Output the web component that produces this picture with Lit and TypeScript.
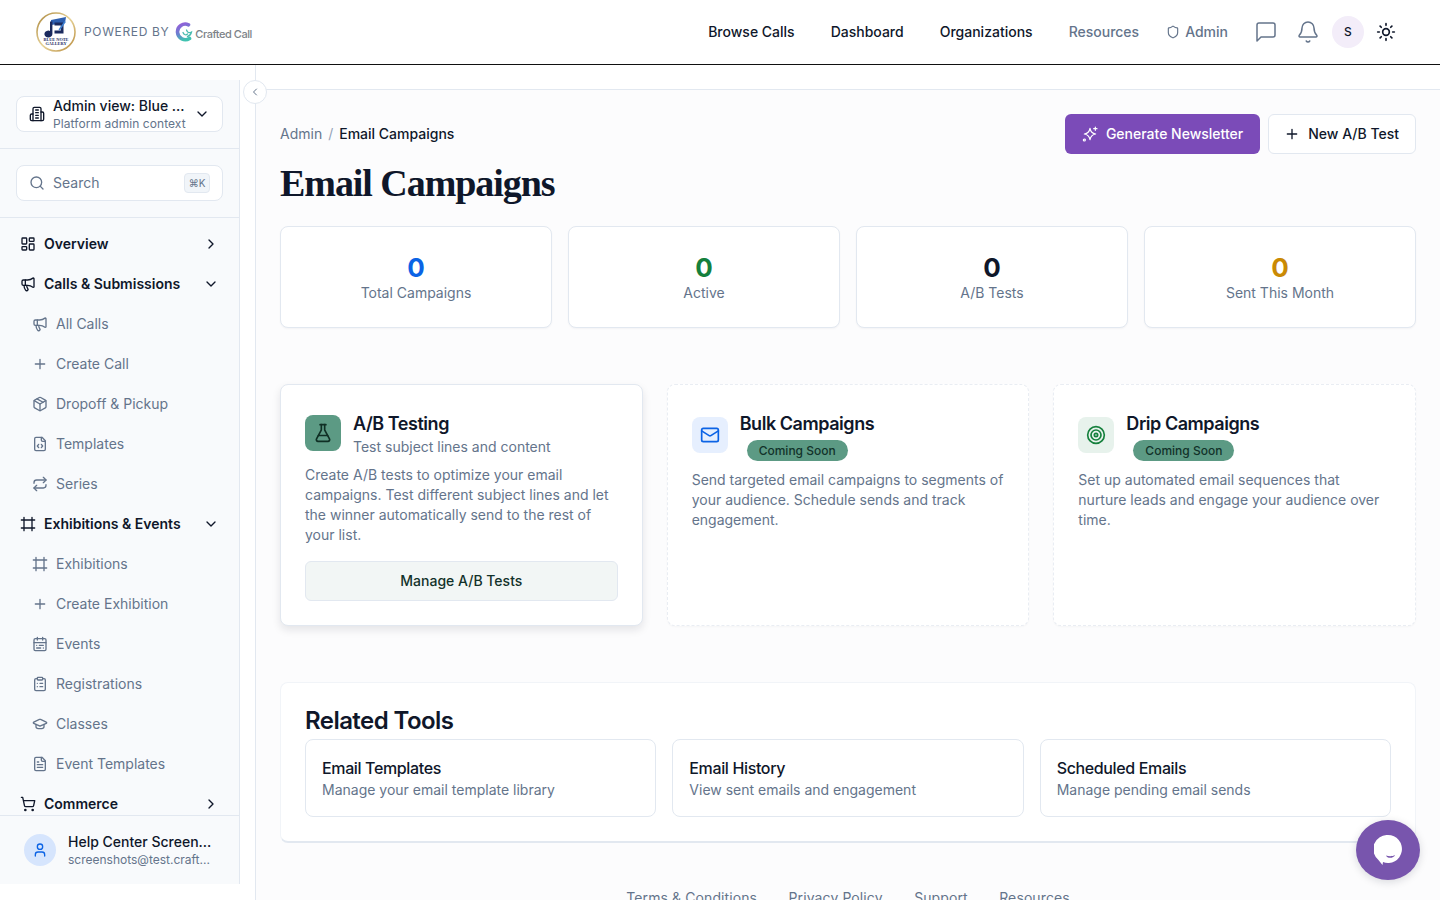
import { LitElement, html, css, svg } from "lit";
import { customElement } from "lit/decorators.js";

const P: Record<string, any> = {
  overview: svg`<rect x="3" y="3" width="7" height="9" rx="1"/><rect x="14" y="3" width="7" height="5" rx="1"/><rect x="14" y="12" width="7" height="9" rx="1"/><rect x="3" y="16" width="7" height="5" rx="1"/>`,
  megaphone: svg`<path d="M11 6a13 13 0 0 0 8.4-2.8A1 1 0 0 1 21 4v12a1 1 0 0 1-1.6.8A13 13 0 0 0 11 14H5a2 2 0 0 1-2-2V8a2 2 0 0 1 2-2z"/><path d="M6 14a12 12 0 0 0 2.4 7.2 2 2 0 0 0 3.2-2.4A8 8 0 0 1 10 14"/><path d="M8 6v8"/>`,
  plus: svg`<path d="M5 12h14M12 5v14"/>`,
  pkg: svg`<path d="M11 21.73a2 2 0 0 0 2 0l7-4A2 2 0 0 0 21 16V8a2 2 0 0 0-1-1.73l-7-4a2 2 0 0 0-2 0l-7 4A2 2 0 0 0 3 8v8a2 2 0 0 0 1 1.73z"/><path d="M12 22V12"/><path d="M3.29 7 12 12l8.71-5"/><path d="m7.5 4.27 9 5.15"/>`,
  filecode: svg`<path d="M10 12.5 8 15l2 2.5"/><path d="m14 12.5 2 2.5-2 2.5"/><path d="M14 2v4a2 2 0 0 0 2 2h4"/><path d="M15 2H6a2 2 0 0 0-2 2v16a2 2 0 0 0 2 2h12a2 2 0 0 0 2-2V7z"/>`,
  repeat: svg`<path d="m17 2 4 4-4 4"/><path d="M3 11v-1a4 4 0 0 1 4-4h14"/><path d="m7 22-4-4 4-4"/><path d="M21 13v1a4 4 0 0 1-4 4H3"/>`,
  frame: svg`<path d="M22 6H2M22 18H2M6 2v20M18 2v20"/>`,
  calendar: svg`<rect x="3" y="4" width="18" height="18" rx="2"/><path d="M16 2v4M8 2v4M3 10h18M17 14h-6M13 18H7M7 14h.01M17 18h.01"/>`,
  clipboard: svg`<rect x="8" y="2" width="8" height="4" rx="1"/><path d="M16 4h2a2 2 0 0 1 2 2v14a2 2 0 0 1-2 2H6a2 2 0 0 1-2-2V6a2 2 0 0 1 2-2h2"/><path d="M12 11h4M12 16h4M8 11h.01M8 16h.01"/>`,
  cap: svg`<path d="M21.42 10.922a1 1 0 0 0-.019-1.838L12.83 5.18a2 2 0 0 0-1.66 0L2.6 9.08a1 1 0 0 0 0 1.832l8.57 3.908a2 2 0 0 0 1.66 0z"/><path d="M6 12.5V16a6 3 0 0 0 12 0v-3.5"/>`,
  filetext: svg`<path d="M15 2H6a2 2 0 0 0-2 2v16a2 2 0 0 0 2 2h12a2 2 0 0 0 2-2V7Z"/><path d="M14 2v4a2 2 0 0 0 2 2h4"/><path d="M10 9H8M16 13H8M16 17H8"/>`,
  cart: svg`<circle cx="8" cy="21" r="1"/><circle cx="19" cy="21" r="1"/><path d="M2.05 2.05h2l2.66 12.42a2 2 0 0 0 2 1.58h9.78a2 2 0 0 0 1.95-1.57l1.65-7.43H5.12"/>`,
  building: svg`<path d="M6 22V4a2 2 0 0 1 2-2h8a2 2 0 0 1 2 2v18Z"/><path d="M6 12H4a2 2 0 0 0-2 2v6a2 2 0 0 0 2 2h2"/><path d="M18 9h2a2 2 0 0 1 2 2v9a2 2 0 0 1-2 2h-2"/><path d="M10 6h4M10 10h4M10 14h4M10 18h4"/>`,
  search: svg`<circle cx="11" cy="11" r="8"/><path d="m21 21-4.3-4.3"/>`,
  shield: svg`<path d="M20 13c0 5-3.5 7.5-7.66 8.95a1 1 0 0 1-.67-.01C7.5 20.5 4 18 4 13V6a1 1 0 0 1 1-1c2 0 4.5-1.2 6.24-2.72a1.17 1.17 0 0 1 1.52 0C14.51 3.81 17 5 19 5a1 1 0 0 1 1 1z"/>`,
  message: svg`<path d="M21 15a2 2 0 0 1-2 2H7l-4 4V5a2 2 0 0 1 2-2h14a2 2 0 0 1 2 2z"/>`,
  bell: svg`<path d="M10.268 21a2 2 0 0 0 3.464 0"/><path d="M3.262 15.326A1 1 0 0 0 4 17h16a1 1 0 0 0 .74-1.673C19.41 13.956 18 12.499 18 8A6 6 0 0 0 6 8c0 4.499-1.411 5.956-2.738 7.326"/>`,
  sun: svg`<circle cx="12" cy="12" r="4"/><path d="M12 2v2M12 20v2M4.93 4.93l1.41 1.41M17.66 17.66l1.41 1.41M2 12h2M20 12h2M6.34 17.66l-1.41 1.41M19.07 4.93l-1.41 1.41"/>`,
  sparkles: svg`<path d="M11 3.5c.9 5.3 3.2 7.6 8.5 8.5-5.3.9-7.6 3.2-8.5 8.5-.9-5.300-3.200-7.600-8.500-8.500 5.300-.9 7.600-3.200 8.500-8.500z" transform="translate(1 0)"/><path d="M20 1.500v5M17.500 4h5"/><circle cx="3.500" cy="21" r="1.500"/>`,
  flask: svg`<path d="M14 2v6a2 2 0 0 0 .245.96l5.51 10.08A2 2 0 0 1 18 22H6a2 2 0 0 1-1.755-2.96l5.51-10.08A2 2 0 0 0 10 8V2"/><path d="M6.453 15h11.094M8.500 2h7"/>`,
  mail: svg`<rect x="2" y="4" width="20" height="16" rx="2"/><path d="m22 7-8.970 5.700a1.940 1.940 0 0 1-2.060 0L2 7"/>`,
  target: svg`<circle cx="12" cy="12" r="10"/><circle cx="12" cy="12" r="6"/><circle cx="12" cy="12" r="2"/>`,
  user: svg`<path d="M19 21v-2a4 4 0 0 0-4-4H9a4 4 0 0 0-4 4v2"/><circle cx="12" cy="7" r="4"/>`,
  right: svg`<path d="m9 18 6-6-6-6"/>`,
  left: svg`<path d="m15 18-6-6 6-6"/>`,
  down: svg`<path d="m6 9 6 6 6-6"/>`,
};

const icon = (n: string, size = 16, sw = 2) =>
  html`<svg class="ic" width=${size} height=${size} viewBox="0 0 24 24" fill="none" stroke="currentColor" stroke-width=${sw} stroke-linecap="round" stroke-linejoin="round">${P[n]}</svg>`;

type NavRow = { label: string; icon: string; chev?: "right" | "down"; sub?: boolean };

const NAV: NavRow[] = [
  { label: "Overview", icon: "overview", chev: "right" },
  { label: "Calls & Submissions", icon: "megaphone", chev: "down" },
  { label: "All Calls", icon: "megaphone", sub: true },
  { label: "Create Call", icon: "plus", sub: true },
  { label: "Dropoff & Pickup", icon: "pkg", sub: true },
  { label: "Templates", icon: "filecode", sub: true },
  { label: "Series", icon: "repeat", sub: true },
  { label: "Exhibitions & Events", icon: "frame", chev: "down" },
  { label: "Exhibitions", icon: "frame", sub: true },
  { label: "Create Exhibition", icon: "plus", sub: true },
  { label: "Events", icon: "calendar", sub: true },
  { label: "Registrations", icon: "clipboard", sub: true },
  { label: "Classes", icon: "cap", sub: true },
  { label: "Event Templates", icon: "filetext", sub: true },
  { label: "Commerce", icon: "cart", chev: "right" },
];

const STATS = [
  { v: "0", l: "Total Campaigns", c: "#0b63e5" },
  { v: "0", l: "Active", c: "#15803d" },
  { v: "0", l: "A/B Tests", c: "#0f172a" },
  { v: "0", l: "Sent This Month", c: "#ca8a04" },
];

const TOOLS = [
  { t: "Email Templates", d: "Manage your email template library" },
  { t: "Email History", d: "View sent emails and engagement" },
  { t: "Scheduled Emails", d: "Manage pending email sends" },
];

@customElement("app-root")
export class AppRoot extends LitElement {
  static styles = css`
    :host { display: block; width: 1440px; height: 900px; overflow: hidden; position: relative; background: #fff; color: #0f172a; font-family: Inter, "Liberation Sans", sans-serif; font-size: 14px; line-height: 20px; }
    * { box-sizing: border-box; }
    .ic { flex: none; display: block; }
    .hdr { height: 65px; border-bottom: 1px solid #111; display: flex; align-items: center; padding: 0 44px 0 36px; }
    .logo { display: block; flex: none; }
    .pow { margin-left: 8px; font-size: 12px; letter-spacing: 0.65px; color: #64748b; line-height: 16px; }
    .cc { margin-left: 5px; display: flex; align-items: center; flex: none; }
    .cc span { font-size: 11px; font-weight: 500; letter-spacing: -0.45px; color: #7d8388; margin: 3px 0 0 1px; line-height: 14px; }
    nav { margin-left: auto; display: flex; align-items: center; }
    nav a { font-weight: 500; color: #0f172a; margin-right: 36px; }
    nav a.mut { color: #64748b; font-weight: 500; }
    nav a.adm { display: flex; align-items: center; gap: 5px; margin-left: -9px; margin-right: 26px; color: #64748b; }
    .hi { color: #64748b; margin-right: 18px; }
    .av { width: 32px; height: 32px; border-radius: 50%; background: #f3edf9; font-size: 12px; font-weight: 500; display: flex; align-items: center; justify-content: center; margin-left: -6px; margin-right: 12px; }
    .sun { color: #0f172a; }

    .body { display: flex; height: 835px; }
    .side { width: 240px; height: 804px; margin-top: 15px; flex: none; background: #f8fafc; border-right: 1px solid #e2e8f0; display: flex; flex-direction: column; }
    .sec { padding: 16px; border-bottom: 1px solid #e2e8f0; height: 69px; flex: none; }
    .box { height: 36px; background: #fff; border: 1px solid #e2e8f0; border-radius: 8px; display: flex; align-items: center; }
    .org { padding: 0 12px; color: #0f172a; }
    .org .t { margin-left: 8px; flex: 1; min-width: 0; }
    .org .t1 { font-weight: 500; line-height: 18px; white-space: nowrap; }
    .org .t2 { font-size: 12px; letter-spacing: 0.07px; color: #64748b; line-height: 16px; margin-top: 1px; white-space: nowrap; }
    .srch { padding: 0 12px; color: #64748b; }
    .srch span { margin-left: 8px; flex: 1; }
    .kbd { flex: none; width: 26px; height: 20px; background: #f1f5f9; border: 1px solid #e2e8f0; border-radius: 4px; font-size: 10px; display: flex; align-items: center; justify-content: center; color: #64748b; line-height: 1; }
    .list { flex: 1; min-height: 0; overflow: hidden; padding-top: 6px; }
    .row { height: 40px; display: flex; align-items: center; padding-left: 20px; font-weight: 600; color: #0f172a; }
    .row span { margin-left: 8px; flex: 1; }
    .row .ch { margin-right: 20px; }
    .row.sub { padding-left: 32px; font-weight: 400; color: #64748b; }
    .foot { height: 69px; flex: none; border-top: 1px solid #e2e8f0; display: flex; align-items: center; padding: 0 24px; }
    .ua { width: 32px; height: 32px; border-radius: 50%; background: #d6e5fd; color: #0b63e5; display: flex; align-items: center; justify-content: center; flex: none; }
    .ut { margin-left: 12px; min-width: 0; }
    .ut b { display: block; font-weight: 500; line-height: 20px; white-space: nowrap; }
    .ut small { display: block; font-size: 12px; color: #64748b; line-height: 16px; white-space: nowrap; }

    .main { margin-left: 15px; flex: 1; min-width: 0; border-left: 1px solid #e2e8f0; position: relative; background: #fcfcfd; }
    .top { height: 25px; background: #fff; border-bottom: 1px solid #e2e8f0; }
    .coll { position: absolute; left: -13px; top: 15px; width: 24px; height: 24px; border-radius: 50%; background: #fff; border: 1px solid #e2e8f0; color: #64748b; display: flex; align-items: center; justify-content: center; }
    .con { padding: 24px 24px 0; }
    .bar { display: flex; align-items: center; height: 40px; }
    .crumb { display: flex; gap: 6px; color: #64748b; }
    .crumb b { font-weight: 500; color: #0f172a; }
    .crumb i { font-style: normal; color: #94a3b8; }
    .btn { height: 40px; border-radius: 6px; display: flex; align-items: center; gap: 8px; font-weight: 500; }
    .btn.p { margin-left: auto; background: #7b4bb8; color: #fff; padding: 0 17px; }
    .btn.s { margin-left: 8px; background: #fff; border: 1px solid #e2e8f0; color: #0f172a; padding: 0 16px 0 15px; }
    h1 { margin: 9px 0 23px; font-family: "Liberation Serif", serif; font-size: 38px; line-height: 40px; font-weight: 700; letter-spacing: -1.05px; color: #0f172a; }
    .stats { display: grid; grid-template-columns: repeat(4, 1fr); gap: 16px; }
    .stat { height: 102px; background: #fff; border: 1px solid #e2e8f0; border-radius: 8px; box-shadow: 0 1px 2px rgba(15,23,42,.04); display: flex; flex-direction: column; align-items: center; padding-top: 25px; }
    .stat b { font-size: 26px; line-height: 32px; font-weight: 700; }
    .stat span { color: #64748b; line-height: 20px; margin-top: -1px; }
    .feats { margin-top: 56px; display: grid; grid-template-columns: repeat(3, 1fr); gap: 24px; }
    .fc { height: 242px; border-radius: 8px; background: #fff; padding: 29px 24px 24px; }
    .fc.on { border: 1px solid #e2e8f0; box-shadow: 0 4px 8px rgba(15,23,42,.1); }
    .fc.off { border: 1px dashed #e9edf3; box-shadow: 0 1px 2px rgba(15,23,42,.03); }
    .fh { display: flex; gap: 12px; }
    .fi { width: 36px; height: 36px; border-radius: 8px; display: flex; align-items: center; justify-content: center; flex: none; }
    .on .fi { margin-top: 1px; }
    .off .fi { margin-top: 3px; }
    .fi.g { background: #5c9a84; color: #0f2f24; }
    .fi.b { background: #e6effe; color: #0b63e5; }
    .fi.t { background: #e7f2ec; color: #15803d; }
    .ft { font-size: 18px; font-weight: 600; line-height: 20px; letter-spacing: -0.45px; color: #0f172a; }
    .fs { color: #64748b; margin-top: 3px; }
    .bdg { display: inline-block; height: 21px; margin: 6px 0 0 7px; padding: 0 12px; border-radius: 999px; background: #5c9a84; color: #12322a; font-size: 12px; font-weight: 500; line-height: 21px; }
    .fd { color: #64748b; margin-top: 8px; }
    .off .fd { margin-top: 9px; }
    .go { margin-top: 16px; height: 40px; border: 1px solid #e2e8f0; border-radius: 6px; background: #f2f6f5; color: #12322a; font-weight: 500; display: flex; align-items: center; justify-content: center; }
    .rel { margin-top: 56px; height: 161px; background: #fff; border: 1px solid #f1f4f8; border-bottom: 2px solid #e2e8f0; border-radius: 8px; padding: 25px 24px 24px; }
    .rel h2 { margin: 0 0 5px; font-size: 24px; line-height: 26px; font-weight: 600; letter-spacing: -0.56px; color: #0f172a; }
    .tools { display: grid; grid-template-columns: repeat(3, 1fr); gap: 16px; }
    .tool { height: 78px; border: 1px solid #e2e8f0; border-radius: 8px; padding: 16px; background: #fff; }
    .tool b { display: block; font-size: 16px; font-weight: 500; line-height: 24px; letter-spacing: -0.36px; }
    .tool span { display: block; color: #64748b; line-height: 20px; }
    .ftr { margin-top: 45px; display: flex; justify-content: center; gap: 31.5px; color: #64748b; letter-spacing: 0.1px; }
    .chat { position: absolute; left: 1356px; top: 820px; width: 64px; height: 60px; border-radius: 50%; background: #7855ad; box-shadow: 0 2px 8px rgba(15,23,42,.15); display: flex; align-items: center; justify-content: center; }
  `;

  private logo() {
    return html`<svg class="logo" width="40" height="40" viewBox="0 0 40 40">
      <defs><linearGradient id="gold" x1="0" y1="0" x2="1" y2="1"><stop offset="0" stop-color="#a9853a"/><stop offset=".5" stop-color="#e8d49a"/><stop offset="1" stop-color="#b6893a"/></linearGradient></defs>
      <circle cx="20" cy="20" r="19" fill="#fff" stroke="url(#gold)" stroke-width="1.600"/>
      <path d="M15 8l15-3-1 6-14 2z" fill="#2d5fb0"/>
      <path d="M14 9.500h2.400v12.500a4 3.400 0 1 1-2.400-3.100z" fill="#1b2a5e"/>
      <path d="M18.500 10.500h9v11h-9v-3h6.300v-5h-6.300z" fill="#1b2a5e"/>
      <path d="M22.500 17.500l6-8.500 1.300 1-6 8.500z" fill="#3f7fd0"/>
      <text x="20" y="28.500" text-anchor="middle" font-family="Liberation Serif, serif" font-size="4.300" font-weight="700" fill="#1b2a5e">BLUE NOTE</text>
      <text x="20" y="32.500" text-anchor="middle" font-family="Liberation Serif, serif" font-size="4.300" font-weight="700" fill="#1b2a5e">GALLERY</text>
    </svg>`;
  }

  private ccMark() {
    return html`<svg width="20" height="22" viewBox="0 0 20 22" style="display:block">
      <defs><linearGradient id="cg" x1="0.3" y1="0" x2="0.6" y2="1"><stop offset="0" stop-color="#8f62d8"/><stop offset=".5" stop-color="#6b7fd0"/><stop offset="1" stop-color="#3fc2b0"/></linearGradient></defs>
      <path d="M14.500 3.800A7.800 7.800 0 1 0 15.500 17.500" fill="none" stroke="url(#cg)" stroke-width="3.600" stroke-linecap="round"/>
      <path d="M9 11.500c1 2.500 3 3 4.500 1.500M12.500 9c.8 2.500 2.500 3.500 5 2-.5 2.500-2 4-4 4.500" fill="none" stroke="#4bbcb0" stroke-width="1.300" stroke-linecap="round"/>
    </svg>`;
  }

  render() {
    return html`
      <header class="hdr">
        ${this.logo()}
        <div class="pow">POWERED BY</div>
        <div class="cc">${this.ccMark()}<span>Crafted Call</span></div>
        <nav>
          <a>Browse Calls</a><a>Dashboard</a><a>Organizations</a><a class="mut">Resources</a>
          <a class="adm">${icon("shield", 14)}Admin</a>
          <div class="hi">${icon("message", 24, 1.5)}</div>
          <div class="hi">${icon("bell", 24, 1.5)}</div>
          <div class="av">S</div>
          <div class="sun">${icon("sun", 20)}</div>
        </nav>
      </header>
      <div class="body">
        <aside class="side">
          <div class="sec"><div class="box org">${icon("building", 16)}
            <div class="t"><div class="t1">Admin view: Blue ...</div><div class="t2">Platform admin context</div></div>
            ${icon("down", 16)}</div></div>
          <div class="sec"><div class="box srch">${icon("search", 16)}<span>Search</span><div class="kbd">⌘K</div></div></div>
          <div class="list">
            ${NAV.map((n) => html`<div class="row ${n.sub ? "sub" : ""}">${icon(n.icon, 16)}<span>${n.label}</span>${n.chev ? html`<div class="ch">${icon(n.chev, 16)}</div>` : ""}</div>`)}
          </div>
          <div class="foot">
            <div class="ua">${icon("user", 16)}</div>
            <div class="ut"><b>Help Center Screen...</b><small>screenshots@test.craft...</small></div>
          </div>
        </aside>
        <main class="main">
          <div class="top"></div>
          <div class="coll">${icon("left", 12)}</div>
          <div class="con">
            <div class="bar">
              <div class="crumb">Admin<i>/</i><b>Email Campaigns</b></div>
              <div class="btn p">${icon("sparkles", 16, 1.8)}Generate Newsletter</div>
              <div class="btn s">${icon("plus", 16)}New A/B Test</div>
            </div>
            <h1>Email Campaigns</h1>
            <div class="stats">
              ${STATS.map((s) => html`<div class="stat"><b style="color:${s.c}">${s.v}</b><span>${s.l}</span></div>`)}
            </div>
            <div class="feats">
              <div class="fc on">
                <div class="fh"><div class="fi g">${icon("flask", 20)}</div><div><div class="ft">A/B Testing</div><div class="fs">Test subject lines and content</div></div></div>
                <div class="fd">Create A/B tests to optimize your email campaigns. Test different subject lines and let the winner automatically send to the rest of your list.</div>
                <div class="go">Manage A/B Tests</div>
              </div>
              <div class="fc off">
                <div class="fh"><div class="fi b">${icon("mail", 20)}</div><div><div class="ft">Bulk Campaigns</div><span class="bdg">Coming Soon</span></div></div>
                <div class="fd">Send targeted email campaigns to segments of your audience. Schedule sends and track engagement.</div>
              </div>
              <div class="fc off">
                <div class="fh"><div class="fi t">${icon("target", 20)}</div><div><div class="ft">Drip Campaigns</div><span class="bdg">Coming Soon</span></div></div>
                <div class="fd">Set up automated email sequences that nurture leads and engage your audience over time.</div>
              </div>
            </div>
            <section class="rel">
              <h2>Related Tools</h2>
              <div class="tools">
                ${TOOLS.map((t) => html`<div class="tool"><b>${t.t}</b><span>${t.d}</span></div>`)}
              </div>
            </section>
            <div class="ftr"><span>Terms &amp; Conditions</span><span>Privacy Policy</span><span>Support</span><span>Resources</span></div>
          </div>
        </main>
      </div>
      <div class="chat">
        <svg width="28" height="30" viewBox="0 0 28 30"><path d="M14 0a14 14 0 1 1-5 27.100L8.500 30 4 24.500A14 14 0 0 1 14 0z" fill="#fff"/><path d="M12 20.500c3 1 6.500 1 9-.5-1 3.500-8 3.800-9 .5z" fill="#7855ad"/></svg>
      </div>
    `;
  }
}
